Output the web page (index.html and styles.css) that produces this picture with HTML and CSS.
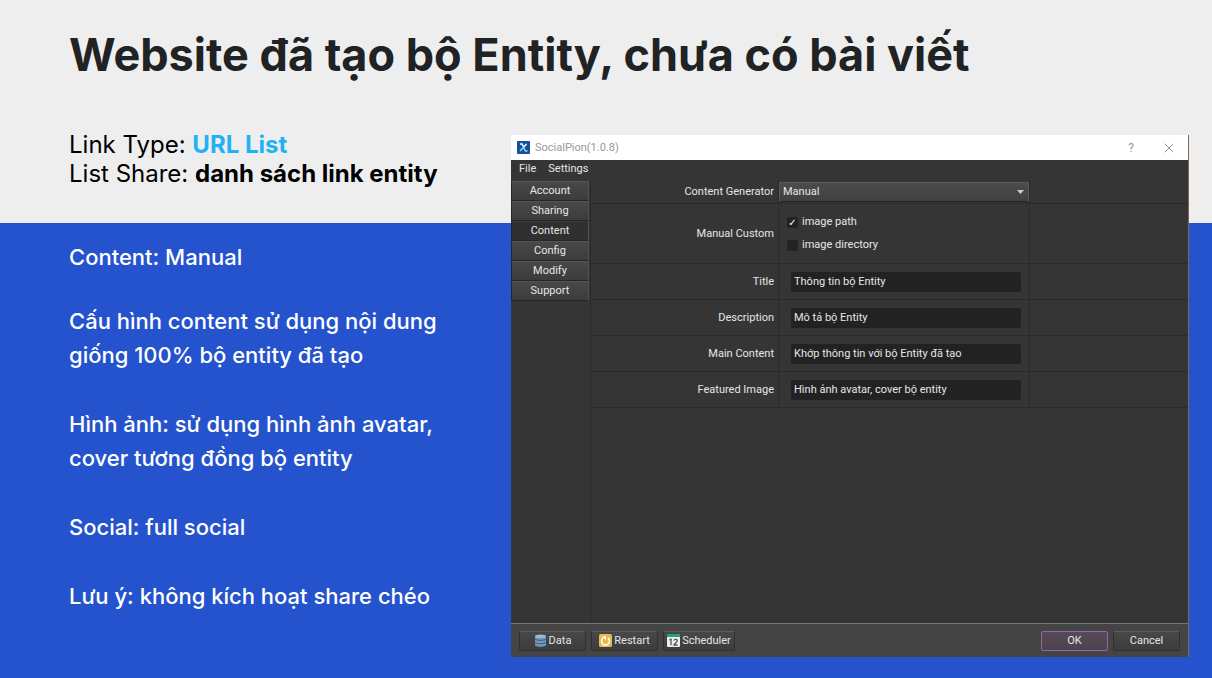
FILE: index.html
```html
<!DOCTYPE html>
<html lang="vi">
<head>
<meta charset="utf-8">
<meta name="viewport" content="width=device-width, initial-scale=1">
<title>Website đã tạo bộ Entity</title>
<link rel="stylesheet" href="styles.css">
</head>
<body>
<main class="slide">
  <header class="intro">
    <h1 class="title">Website đã tạo bộ Entity, chưa có bài viết</h1>
    <p class="lead">Link Type: <strong class="accent">URL List</strong></p>
    <p class="lead">List Share: <strong>danh sách link entity</strong></p>
  </header>
  <section class="notes">
    <p class="note note-first">Content: Manual</p>
    <p class="note">Cấu hình content sử dụng nội dung<br>giống 100% bộ entity đã tạo</p>
    <p class="note">Hình ảnh: sử dụng hình ảnh avatar,<br>cover tương đồng bộ entity</p>
    <p class="note">Social: full social</p>
    <p class="note">Lưu ý: không kích hoạt share chéo</p>
  </section>
  <section class="window">
    <div class="titlebar">
      <svg class="app-icon" viewBox="0 0 13 13" aria-hidden="true"><rect width="13" height="13" rx="1" fill="#17519b"/><path d="M3 3h2l1.700 3L9.500 3" fill="none" stroke="#fff" stroke-width="1.500"/><path d="M3 10l3.500-3.700L8.500 10h2" fill="none" stroke="#8fd3f5" stroke-width="1.500"/></svg>
      <span class="app-name">SocialPion(1.0.8)</span>
      <button class="caption-btn" type="button" aria-label="Help">?</button>
      <button class="caption-btn" type="button" aria-label="Close"><svg class="close-icon" viewBox="0 0 10 10" aria-hidden="true"><path d="M.7.7l8.600 8.600M9.300.7L.7 9.300" stroke="#999" fill="none"/></svg></button>
    </div>
    <nav class="menubar">
      <button class="menu" type="button">File</button>
      <button class="menu" type="button">Settings</button>
    </nav>
    <div class="workspace">
      <nav class="tabs">
        <button class="tab" type="button">Account</button>
        <button class="tab" type="button">Sharing</button>
        <button class="tab tab-active" type="button">Content</button>
        <button class="tab" type="button">Config</button>
        <button class="tab" type="button">Modify</button>
        <button class="tab" type="button">Support</button>
      </nav>
      <form class="form">
        <div class="row row-select">
          <label class="label" for="generator">Content Generator</label>
          <div class="cell cell-select">
            <select class="select" id="generator"><option>Manual</option></select>
            <svg class="arrow" viewBox="0 0 7 4" aria-hidden="true"><path d="M0 0h7L3.500 4z" fill="#ccc"/></svg>
          </div>
        </div>
        <div class="row row-checks">
          <span class="label" id="custom">Manual Custom</span>
          <div class="cell checks" role="group" aria-labelledby="custom">
            <label class="check"><input class="box" type="checkbox" checked>image path</label>
            <label class="check"><input class="box" type="checkbox">image directory</label>
          </div>
        </div>
        <div class="row">
          <label class="label" for="f-title">Title</label>
          <div class="cell"><input class="field" id="f-title" type="text" value="Thông tin bộ Entity"></div>
        </div>
        <div class="row">
          <label class="label" for="f-desc">Description</label>
          <div class="cell"><input class="field" id="f-desc" type="text" value="Mô tả bộ Entity"></div>
        </div>
        <div class="row">
          <label class="label" for="f-main">Main Content</label>
          <div class="cell"><input class="field" id="f-main" type="text" value="Khớp thông tin với bộ Entity đã tạo"></div>
        </div>
        <div class="row">
          <label class="label" for="f-image">Featured Image</label>
          <div class="cell"><input class="field" id="f-image" type="text" value="Hình ảnh avatar, cover bộ entity"></div>
        </div>
      </form>
    </div>
    <footer class="actions">
      <button class="btn" type="button"><svg class="icon" viewBox="0 0 13 13" aria-hidden="true"><path d="M1 2.500v8.500c0 2.400 11 2.400 11 0V2.500z" fill="#7396b8"/><ellipse cx="6.500" cy="2.300" rx="5.500" ry="1.800" fill="#9db9d3"/><path d="M1 5c1 1.800 10 1.800 11 0M1 8.300c1 1.800 10 1.800 11 0" fill="none" stroke="#405c78" stroke-width="1"/></svg>Data</button>
      <button class="btn" type="button"><svg class="icon" viewBox="0 0 13 13" aria-hidden="true"><rect width="13" height="13" rx="1.500" fill="#e8b94b"/><path d="M4 3.800a4 4 0 1 0 5 0" fill="none" stroke="#fff" stroke-width="1.500"/><path d="M3 2.200h4v4z" fill="#fff"/></svg>Restart</button>
      <button class="btn btn-wide" type="button"><svg class="icon" viewBox="0 0 13 13" aria-hidden="true"><rect width="13" height="13" rx="1" fill="#ecefe9"/><path d="M0 0h13v3H0z" fill="#27a078"/><path d="M2.300 6l1.700-.8v6M7 6.500c.3-1.800 3.500-1.500 3.200.4C10 8.300 7.500 9.500 7 11h3.700" fill="none" stroke="#555" stroke-width="1.300"/></svg>Scheduler</button>
      <button class="btn btn-ok" type="button">OK</button>
      <button class="btn" type="button">Cancel</button>
    </footer>
  </section>
</main>
</body>
</html>
```
FILE: styles.css
```css
* { box-sizing: border-box; }
body {
  margin: 0;
  background: #2453cd;
  font-family: Inter, "Noto Sans", sans-serif;
}
button, input, select { font: inherit; color: inherit; }
h1, p { margin: 0; }
.slide {
  display: grid;
  grid-template-columns: 511px minmax(0, 1fr) 23px;
  grid-template-rows: auto 1fr;
  min-height: 100vh;
}
.intro {
  grid-column: 1 / -1;
  grid-row: 1;
  background: #eee;
  padding: 26px 69px 34px;
}
.title {
  margin-bottom: 46px;
  color: #202224;
  font-size: 45px;
  line-height: 58px;
  font-weight: 700;
}
.lead {
  color: #000;
  font-size: 24px;
  line-height: 29px;
}
.lead:last-child { margin-bottom: 1px; }
.accent { color: #1fb2f8; }
.notes {
  grid-column: 1;
  grid-row: 2;
  display: flex;
  flex-direction: column;
  gap: 35px;
  padding: 17px 0 17px 69px;
  color: #fff;
  font-size: 22px;
  line-height: 34px;
  font-weight: 500;
  white-space: nowrap;
}
.note-first { margin-bottom: -5px; }
.window {
  grid-column: 2;
  grid-row: 1 / 3;
  display: flex;
  flex-direction: column;
  margin: 135px 0 21px;
  border-right: 1px solid #85654f;
  background: #353535;
  color: #e6e6e6;
  font-family: Roboto, "Noto Sans", sans-serif;
  font-size: 11px;
  line-height: 14px;
}
.titlebar {
  display: flex;
  align-items: center;
  height: 25px;
  padding-left: 6px;
  background: #fff;
  color: #999;
}
.app-icon { width: 13px; height: 13px; }
.app-name { flex: 1; padding-left: 5px; }
.caption-btn {
  width: 38px;
  padding: 0;
  border: 0;
  background: none;
  font-size: 12px;
}
.close-icon { width: 10px; height: 10px; vertical-align: middle; }
.menubar { display: flex; gap: 12px; padding: 2px 8px 5px; }
.menu { padding: 0; border: 0; background: none; }
.workspace { display: flex; flex: 1; }
.tabs {
  display: flex;
  flex-direction: column;
  width: 80px;
  border-right: 1px solid #2b2b2b;
  padding-right: 1px;
}
.tab {
  height: 20px;
  padding: 0;
  border: 1px solid #262626;
  border-top-color: #555;
  border-right-color: #505050;
  background: linear-gradient(#484848, #3c3c3c);
}
.tab-active { background: #303030; border-top-color: #3c3c3c; }
.form { flex: 1; }
.row {
  display: grid;
  grid-template-columns: 187px 252px 1fr;
  height: 36px;
  border-bottom: 1px solid #2b2b2b;
}
.row-select { height: 23px; }
.row-checks { height: 60px; }
.label { align-self: center; padding-right: 4px; text-align: right; }
.cell {
  display: flex;
  align-items: center;
  padding: 0 8px 0 12px;
  border: solid #2b2b2b;
  border-width: 0 1px;
}
.cell-select { position: relative; padding: 0; }
.select {
  width: 100%;
  height: 20px;
  padding: 0 3px;
  appearance: none;
  border: 1px solid #5a5a5a;
  border-bottom-color: #222;
  background: linear-gradient(#4c4c4c, #404040);
}
.arrow { position: absolute; right: 5px; width: 7px; height: 4px; }
.checks {
  flex-direction: column;
  align-items: flex-start;
  justify-content: center;
  gap: 9px;
  padding-left: 8px;
}
.check { display: flex; align-items: center; gap: 4px; }
.box {
  display: grid;
  place-items: center;
  width: 11px;
  height: 11px;
  margin: 0;
  appearance: none;
  border-radius: 2px;
  background: #222;
}
.box:checked::after {
  content: "✓";
  color: #fff;
  font: 700 10px/11px "DejaVu Sans", sans-serif;
}
.field {
  width: 100%;
  height: 20px;
  padding: 0 3px;
  border: 0;
  border-radius: 2px;
  background: #222;
}
.actions {
  display: flex;
  align-items: center;
  gap: 5px;
  height: 34px;
  padding: 0 8px;
  border-top: 1px solid #777;
  background: #444;
}
.btn {
  display: flex;
  align-items: center;
  justify-content: center;
  gap: 2px;
  width: 67px;
  height: 20px;
  padding: 0;
  border: 1px solid #303030;
  border-top-color: #5c5c5c;
  border-radius: 2px;
  background: linear-gradient(#484848, #3c3c3c);
  white-space: nowrap;
}
.btn-wide { width: 72px; }
.icon { width: 13px; height: 13px; }
.btn-ok {
  margin-left: auto;
  border-color: #9268ab;
  background: linear-gradient(#554b58, #4b434d);
}
```
